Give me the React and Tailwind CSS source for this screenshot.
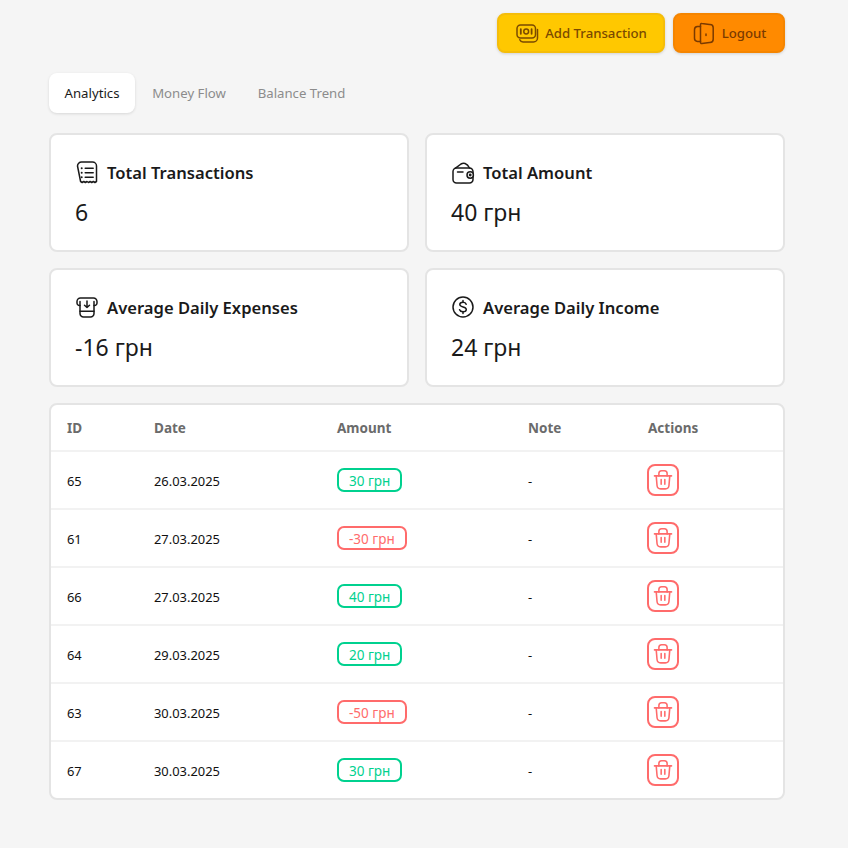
const font = { fontFamily: '"Noto Sans", sans-serif' };

const iconProps = {
  fill: "none",
  stroke: "currentColor",
  strokeWidth: 1.5,
  strokeLinecap: "round",
  strokeLinejoin: "round",
  viewBox: "0 0 24 24",
};

const Money = () => (
  <svg {...iconProps} className="w-[24px] h-[24px]">
    <rect x="2" y="4" width="18.5" height="13" rx="3.5" />
    <path d="M22.5 8.5V17a4 4 0 0 1-4 4H8a3.5 3.5 0 0 1-3.2-2.2" />
    <circle cx="11.2" cy="10.5" r="2.4" />
    <path d="M5.8 8.2v4.6M16.6 8.2v4.6" strokeWidth="1.8" />
  </svg>
);
const Door = () => (
  <svg {...iconProps} className="w-[24px] h-[24px]">
    <path d="M8.5 5.5H5.500A3.200 3.200 0 0 0 2.500 8.700v8.600a3.200 3.200 0 0 0 3 3.200h3" />
    <path d="M8.500 3.600c0-.8.7-1.300 1.400-1.100l7.600 1H18a3.200 3.200 0 0 1 3.200 3.200v11.600A3.200 3.200 0 0 1 18 21.500h-.5l-7.600 1c-.7.2-1.400-.3-1.400-1.100z" />
    <path d="M14 13v1.400" />
  </svg>
);
const Receipt = () => (
  <svg {...iconProps} className="w-[24px] h-[24px]">
    <path d="M2.500 6a4 4 0 0 1 4-4h11a4 4 0 0 1 4 4v15.500l-1.600 1-1.600-1-1.600 1-1.600-1-1.600 1-1.500-1-1.600 1-1.600-1-1.600 1-1.600-1z" />
    <path d="M10.200 8.200h8M10.200 12.700h8M10.200 17.300h8" />
    <path d="M6.700 8.200h.01M6.700 12.700h.01M6.700 17.300h.01" strokeWidth="2" />
  </svg>
);
const Wallet = () => (
  <svg {...iconProps} className="w-[24px] h-[24px]">
    <path d="M2 11.500v8A3.500 3.500 0 0 0 5.500 23h13a3.500 3.500 0 0 0 3.500-3.500v-8A3.500 3.500 0 0 0 18.500 8h-13A3.500 3.500 0 0 0 2 11.500z" />
    <path d="M4.500 8.200 10 4c2-1.300 6-1.500 8.500 4" />
    <path d="M6.500 12h5.500" />
    <circle cx="19.200" cy="15" r="3.200" fill="white" />
    <circle cx="19.200" cy="15" r=".7" />
  </svg>
);
const Atm = () => (
  <svg {...iconProps} className="w-[24px] h-[24px]">
    <path d="M5 10.500H4.500a2.500 2.500 0 0 1-2.500-2.500V6.500A3.500 3.500 0 0 1 5.500 3h13A3.500 3.500 0 0 1 22 6.500V8a2.500 2.500 0 0 1-2.500 2.500H19" />
    <path d="M5 6.500V18.500A3.500 3.500 0 0 0 8.500 22h7a3.500 3.500 0 0 0 3.500-3.500V6.500" />
    <path d="M12 6v6.500M9.500 10.200 12 12.500l2.500-2.300M5 16.200h14" />
  </svg>
);
const Dollar = () => (
  <svg {...iconProps} className="w-[24px] h-[24px]">
    <circle cx="12" cy="12" r="10" />
    <path d="M15.200 9.300c-.4-1.200-1.600-2-3.200-2-1.800 0-3.200 1-3.200 2.300 0 3.100 6.500 1.700 6.500 4.800 0 1.300-1.500 2.300-3.300 2.300-1.700 0-3-.8-3.400-2" />
    <path d="M12 5.600v1.700M12 16.700v1.700" />
  </svg>
);
const Trash = () => (
  <svg {...iconProps} className="w-[22px] h-[22px]" strokeWidth="1.700">
    <path d="M2.700 7.500h18.600" />
    <path d="M7.500 7.500V5a3 3 0 0 1 3-3h3a3 3 0 0 1 3 3v2.500" />
    <path d="M4.600 7.500l.9 10.500a4 4 0 0 0 4 3.700h5a4 4 0 0 0 4-3.700l.9-10.500" />
    <path d="M10 11.500v5M14 11.500v5" />
  </svg>
);

const stats = [
  { icon: <Receipt />, label: "Total Transactions", value: "6" },
  { icon: <Wallet />, label: "Total Amount", value: "40 грн" },
  { icon: <Atm />, label: "Average Daily Expenses", value: "-16 грн" },
  { icon: <Dollar />, label: "Average Daily Income", value: "24 грн" },
];

const rows = [
  ["65", "26.03.2025", "30 грн", true],
  ["61", "27.03.2025", "-30 грн", false],
  ["66", "27.03.2025", "40 грн", true],
  ["64", "29.03.2025", "20 грн", true],
  ["63", "30.03.2025", "-50 грн", false],
  ["67", "30.03.2025", "30 грн", true],
];

const cols = "grid grid-cols-[87px_183px_191px_120px_1fr] items-center pl-[16px]";

export default function App() {
  return (
    <div style={font} className="min-h-[848px] bg-[#f5f5f5] pt-[13px] pl-[49px] text-[#1a1a1a]">
      <div className="w-[736px] flex flex-col">
        <div className="flex justify-end gap-[8px]">
          <button className="h-[40px] w-[168px] flex items-center justify-center gap-[6px] rounded-[8px] bg-[#ffc800] border-2 border-[#f5bd0a] shadow-[0_1px_3px_rgba(0,0,0,0.15)] text-[#7a4a00] text-[13.2px] font-medium">
            <Money />
            <span className="pt-[2px]">Add Transaction</span>
          </button>
          <button className="h-[40px] w-[112px] flex items-center justify-center gap-[6px] rounded-[8px] bg-[#ff8a00] border-2 border-[#f58500] shadow-[0_1px_3px_rgba(0,0,0,0.15)] text-[#7a3a00] text-[13.2px] font-medium">
            <Door />
            <span className="pt-[2px]">Logout</span>
          </button>
        </div>

        <div className="mt-[20px] flex h-[40px] text-[13.2px]">
          <div className="w-[86px] pt-[2px] flex items-center justify-center rounded-[8px] bg-white shadow-[0_1px_3px_rgba(0,0,0,0.12)] text-[#1a1a1a]">Analytics</div>
          <div className="w-[108px] pt-[2px] flex items-center justify-center text-[#8c8c8c]">Money Flow</div>
          <div className="w-[117px] pt-[2px] flex items-center justify-center text-[#8c8c8c]">Balance Trend</div>
        </div>

        <div className="mt-[20px] grid grid-cols-2 gap-[16px]">
          {stats.map((s) => (
            <div key={s.label} className="h-[119px] rounded-[8px] bg-white border-2 border-[#e4e4e4] pl-[24px] pt-[24px]">
              <div className="flex items-center gap-[8px] h-[26px]">
                {s.icon}
                <span className="text-[16.6px] font-semibold leading-[26px] pt-[2px]">{s.label}</span>
              </div>
              <div className="mt-[11px] text-[23px] leading-[32px]">{s.value}</div>
            </div>
          ))}
        </div>

        <div className="mt-[16px] rounded-[8px] bg-white border-2 border-[#e4e4e4]">
          <div className={`${cols} h-[45px] pt-[2px] text-[13.500px] font-bold text-[#6b6b6b]`}>
            <div>ID</div>
            <div>Date</div>
            <div>Amount</div>
            <div>Note</div>
            <div>Actions</div>
          </div>
          {rows.map(([id, date, amt, pos]) => (
            <div key={id} className={`${cols} h-[58px] border-t-2 border-[#f2f2f2] text-[12.900px] text-[#111111]`}>
              <div className="pt-[3px]">{id}</div>
              <div className="pt-[3px]">{date}</div>
              <div>
                <span className={`inline-flex h-[24px] items-center pt-[2px] px-[10px] rounded-[7px] border-2 bg-white text-[13.500px] ${pos ? "border-[#00d18f] text-[#00d18f]" : "border-[#ff6b6b] text-[#ff6b6b]"}`}>{amt}</span>
              </div>
              <div className="pt-[3px]">-</div>
              <div>
                <span className="ml-[-1px] w-[32px] h-[32px] flex items-center justify-center rounded-[8px] border-2 border-[#ff6b6b] text-[#ff6b6b]">
                  <Trash />
                </span>
              </div>
            </div>
          ))}
        </div>
      </div>
    </div>
  );
}
